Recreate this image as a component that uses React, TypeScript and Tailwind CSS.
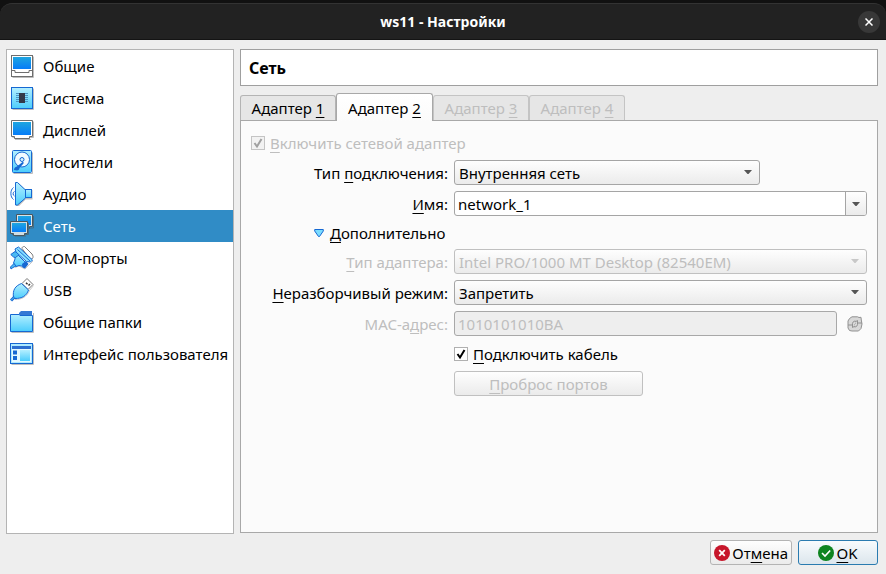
import { useState, type ReactNode } from 'react';

const BlueGradient = ({ id }: { id: string }) => (
  <defs>
    <linearGradient id={`${id}-deep`} x1="0" y1="0" x2="0" y2="1">
      <stop offset="0" stopColor="#1fa6e0" />
      <stop offset="1" stopColor="#067cf8" />
    </linearGradient>
    <linearGradient id={`${id}-light`} x1="0" y1="0" x2="0" y2="1">
      <stop offset="0" stopColor="#b4efff" />
      <stop offset="1" stopColor="#4ccdfc" />
    </linearGradient>
  </defs>
);

function Icon({ id, children }: { id: string; children: ReactNode }) {
  return (
    <svg viewBox="0 0 24 24" className="size-6 shrink-0" fill="none" aria-hidden="true">
      <BlueGradient id={id} />
      {children}
    </svg>
  );
}

const GeneralIcon = () => (
  <Icon id="general">
    <path d="M2.5 23.5h21V2.5" stroke="#bdbdbd" />
    <rect x="1.5" y="1.5" width="21" height="21" fill="#fff" stroke="#6e6e6e" />
    <rect x="3" y="3" width="18" height="12" fill="url(#general-deep)" />
    <path d="M1.5 16.5h3.5v2h14v-2h3.5" stroke="#6e6e6e" />
  </Icon>
);

const SystemIcon = () => (
  <Icon id="system">
    <path d="M2.5 23.5h21V2.5" stroke="#bdbdbd" />
    <rect x="1.5" y="1.5" width="21" height="21" fill="url(#system-light)" stroke="#1668d2" />
    <path d="M6 7.5h12M6 9.5h12M6 11.5h12M6 13.5h12M6 15.5h12" stroke="#4a93c4" />
    <rect x="9" y="7" width="6" height="10" fill="#33394a" />
  </Icon>
);

const DisplayIcon = () => (
  <Icon id="display">
    <path d="M2.5 19.5h21V3.5M5 21.5h16" stroke="#bdbdbd" />
    <path d="M1.5 2.5h21v16h-3v2h-15v-2h-3z" fill="#fff" stroke="#6e6e6e" />
    <rect x="3" y="4" width="18" height="13" fill="url(#display-deep)" />
  </Icon>
);

const StorageIcon = () => (
  <Icon id="storage">
    <path d="M3.5 23.5h19V2.5" stroke="#bdbdbd" />
    <rect x="2.5" y="0.5" width="19" height="22" rx="1" fill="url(#storage-light)" stroke="#1668d2" />
    <circle cx="12" cy="9.5" r="7.5" fill="#f2fbff" stroke="#1668d2" />
    <circle cx="12" cy="9.5" r="2" fill="#d8f4ff" stroke="#1668d2" />
    <path d="M4 20c0-2 1-3 3-3.5l5.5-4.5c1 0 1.5.5 1 1.5l-4 4.5c0 1.5-1 2.5-2.5 2.5z" fill="#1668d2" />
  </Icon>
);

const AudioIcon = () => (
  <Icon id="audio">
    <path d="M6 1h2.5l7 7h7v9.500h-7l-6.500 6.500h-3z" fill="#bdbdbd" />
    <path d="M5.5.5h2l8 7.500v8l-8 7h-2z" fill="url(#audio-light)" stroke="#1668d2" />
    <rect x="15.5" y="7.5" width="6" height="8" fill="url(#audio-light)" stroke="#1668d2" />
    <path d="M4.500 9.500a2.500 2.500 0 0 0 0 4.500M3.500 5.500C0 8 0 15 3.500 17.500" stroke="#1668d2" />
  </Icon>
);

const NetworkIcon = () => (
  <Icon id="network">
    <path d="M8 14h15.5V2" stroke="#426d86" />
    <path d="M6.5.5h16v12h-3v2h-10v-2h-3z" fill="#d8e4ea" stroke="#48575f" />
    <rect x="8" y="2" width="13" height="9" fill="url(#network-deep)" />
    <path d="M2 20.5h16.5V9M5 22h11" stroke="#426d86" />
    <path d="M.5 7.5h17v12h-3v2h-11v-2h-3z" fill="#cfdde4" stroke="#48575f" />
    <rect x="2" y="9" width="14" height="9" fill="url(#network-deep)" />
  </Icon>
);

const SerialIcon = () => (
  <Icon id="serial">
    <path d="M12 2.500c0-1.500 1-2 2.500-2L22 8c1 1.500 1.500 3 .5 4.500l-2 1z" fill="#fff" stroke="#7c7c7c" />
    <path d="M5 21.500l4-1.500 6 3 8-8" stroke="#c8c8c8" />
    <path d="M5 6L15.500 16.500 14 20.500l-5-1-3 1L3.500 17 5 13z" fill="url(#serial-light)" stroke="#1668d2" strokeLinejoin="round" />
    <path d="M.800 8.500L5 5.500l4.500 3-4 3-2-.5z" fill="#4ab9f2" stroke="#1668d2" strokeLinejoin="round" />
    <path d="M12 18l4-3 2.500 3-3.500 4.500-2.500-1z" fill="#1668d2" />
    <path d="M8.500 1L22.500 14l-2 2-4-.5L6 6 5 3z" fill="#8be0ff" stroke="#1668d2" strokeLinejoin="round" />
    <path d="M7.500 3.500L20 15" stroke="#1668d2" />
    <path d="M1 23l-.5-2L4 17.500 6 20l-3 1.500z" fill="#4ab9f2" stroke="#1668d2" />
  </Icon>
);

const UsbIcon = () => (
  <Icon id="usb">
    <path d="M5 21.500c7 0 12-3 14.500-9l4-5" stroke="#c8c8c8" />
    <path d="M12 5.5l5-5 6 6-5 5z" fill="#fff" stroke="#777" />
    <path d="M16 4.800l1.500 1.500M18.500 7.500l1.500-1.500" stroke="#333" strokeWidth="1.500" />
    <path d="M3.500 19.5C2.500 12 5 8 11.5 5.500l7 6.500c-2 6-6.500 8.500-13.500 8.500z" fill="url(#usb-light)" stroke="#1668d2" />
    <path d="M1 22.500l3.500-3.500" stroke="#1668d2" strokeWidth="3" />
    <path d="M1.300 22.200l3-3" stroke="#58c9f8" />
  </Icon>
);

const FolderIcon = () => (
  <Icon id="folder">
    <path d="M1.5 22.500h22V3" stroke="#bdbdbd" />
    <path d="M9 5V3l2-2h11v5H9z" fill="#3478d4" />
    <path d="M.5 4.500H9l1 1h12.500v16H.5z" fill="url(#folder-light)" stroke="#1668d2" />
  </Icon>
);

const InterfaceIcon = () => (
  <Icon id="interface">
    <path d="M1.5 22.500h22V2.500" stroke="#bdbdbd" />
    <rect x="0.5" y="1.5" width="22" height="20" fill="#aeeaff" stroke="#1668d2" />
    <path d="M2 5.500h19" stroke="#2c6fd0" strokeWidth="3" />
    <rect x="2" y="7" width="19" height="13" fill="#e4f9ff" />
    <path d="M3 8.500h4v4H3zM3 14h4v4H3z" fill="#1668d2" />
    <rect x="10" y="8" width="10" height="11" fill="url(#interface-light)" />
  </Icon>
);

const sections = [
  { name: 'Общие', Glyph: GeneralIcon },
  { name: 'Система', Glyph: SystemIcon },
  { name: 'Дисплей', Glyph: DisplayIcon },
  { name: 'Носители', Glyph: StorageIcon },
  { name: 'Аудио', Glyph: AudioIcon },
  { name: 'Сеть', Glyph: NetworkIcon },
  { name: 'COM-порты', Glyph: SerialIcon },
  { name: 'USB', Glyph: UsbIcon },
  { name: 'Общие папки', Glyph: FolderIcon },
  { name: 'Интерфейс пользователя', Glyph: InterfaceIcon },
];

const Key = ({ children }: { children: string }) => (
  <span className="underline decoration-1 underline-offset-3 [text-decoration-skip-ink:none]">{children}</span>
);

const Arrow = ({ className = '' }: { className?: string }) => (
  <svg viewBox="0 0 8 4" className={`h-1 w-2 ${className}`} fill="currentColor" aria-hidden="true">
    <path d="M0 0h8L4.500 4h-1z" />
  </svg>
);

function Combo({ id, value, disabled, className = '' }: { id: string; value: string; disabled?: boolean; className?: string }) {
  return (
    <div className={`relative ${className}`}>
      <select
        id={id}
        disabled={disabled}
        defaultValue={value}
        className="block h-[25px] w-full appearance-none rounded-[3px] border border-[#a5a5a5] bg-linear-to-b from-[#fefefe] to-[#ebebeb] px-1 leading-5 text-black opacity-100 disabled:border-[#c0c0c0] disabled:text-[#bebebe]"
      >
        <option>{value}</option>
      </select>
      <Arrow className={`pointer-events-none absolute top-[10px] right-2 ${disabled ? 'text-[#c8c8c8]' : 'text-[#555]'}`} />
    </div>
  );
}

function Check({ disabled, children }: { disabled?: boolean; children: ReactNode }) {
  return (
    <label className={`flex h-[23px] items-center gap-[5px] ${disabled ? 'text-[#bebebe]' : ''}`}>
      <span className="relative size-3.5 shrink-0">
        <input
          type="checkbox"
          defaultChecked
          disabled={disabled}
          className="peer block size-3.5 appearance-none border border-[#b0b0b0] bg-white disabled:border-[#c4c4c4] disabled:bg-[#f2f2f2]"
        />
        <svg
          viewBox="0 0 14 14"
          className={`pointer-events-none absolute inset-0 hidden size-3.5 peer-checked:block ${disabled ? 'text-[#a0a0a0]' : 'text-black'}`}
          fill="none"
          stroke="currentColor"
          strokeWidth="2"
          aria-hidden="true"
        >
          <path d="M3.500 7l2.500 3.500L10.500 3" />
        </svg>
      </span>
      <span>{children}</span>
    </label>
  );
}

export default function App() {
  const [section, setSection] = useState('Сеть');
  const [tab, setTab] = useState(2);

  return (
    <div className="flex min-h-screen flex-col bg-[#eeeeee] font-['Noto_Sans','Open_Sans',sans-serif] text-[15px] leading-5 text-black">
      <header className="bg-[#111] pt-[3px]">
        <div className="grid h-[37px] grid-cols-[1fr_auto_1fr] items-center rounded-t-xl border-t border-b border-t-[#333] border-b-[#141414] bg-[#222] px-1.5">
          <h1 className="col-start-2 text-sm font-bold text-white">ws11 - Настройки</h1>
          <button type="button" aria-label="Закрыть" className="flex size-[22px] items-center justify-center justify-self-end rounded-full bg-[#383838] text-white">
            <svg viewBox="0 0 8 8" className="size-2" stroke="currentColor" strokeWidth="1.500" aria-hidden="true">
              <path d="M.5.5l7 7M7.500.5l-7 7" />
            </svg>
          </button>
        </div>
      </header>

      <div className="grid flex-1 grid-cols-[228px_1fr] gap-1.5 pt-[9px] pr-2 pl-1.5">
        <nav className="border border-[#b4b4b4] bg-white">
          {sections.map(({ name, Glyph }) => (
            <button
              key={name}
              type="button"
              onClick={() => setSection(name)}
              className={`flex h-8 w-full items-center gap-[9px] pl-[3px] text-left whitespace-nowrap ${section === name ? 'bg-[#308cc6] text-white' : ''}`}
            >
              <Glyph />
              <span>{name}</span>
            </button>
          ))}
        </nav>

        <main className="flex flex-col pb-px">
          <h2 className="mb-[7px] flex h-[37px] items-center border border-[#9f9f9f] bg-white px-2 text-base font-bold">{section}</h2>

          <div role="tablist" className="flex h-[27px] items-end">
            {[1, 2, 3, 4].map((n) => (
              <button
                key={n}
                type="button"
                role="tab"
                aria-selected={tab === n}
                disabled={n > 2}
                onClick={() => setTab(n)}
                className={`rounded-t-[3px] border border-b-0 ${
                  tab === n
                    ? 'relative -mb-px h-7 w-[97px] border-[#a8a8a8] bg-linear-to-b from-white to-[#fbfbfb]'
                    : 'h-[25px] w-24 border-[#b4b4b4] bg-[#e6e6e6] disabled:border-[#c4c4c4] disabled:text-[#bebebe]'
                }`}
              >
                Адаптер <Key>{String(n)}</Key>
              </button>
            ))}
          </div>

          <section className="flex flex-1 flex-col gap-1.5 border border-[#a8a8a8] bg-[#fbfbfb] p-2.5">
            <Check disabled>
              <Key>В</Key>ключить сетевой адаптер
            </Check>

            <div className="grid grid-cols-[197px_1fr] items-center gap-1.5">
              <label htmlFor="attachment" className="text-right">Тип <Key>п</Key>одключения:</label>
              <Combo id="attachment" value="Внутренняя сеть" className="w-[306px]" />

              <label htmlFor="network" className="text-right"><Key>И</Key>мя:</label>
              <div className="flex h-[25px] rounded-[3px] border border-[#a5a5a5] bg-white">
                <input id="network" defaultValue="network_1" className="min-w-0 flex-1 rounded-[3px] px-[3px] outline-none" />
                <button type="button" aria-label="Показать список" className="flex w-[21px] items-center justify-center rounded-r-[2px] border-l border-[#a5a5a5] bg-linear-to-b from-[#fefefe] to-[#ebebeb] text-[#555]">
                  <Arrow />
                </button>
              </div>

              <button type="button" aria-expanded="true" className="col-span-2 flex h-[21px] items-center gap-1.5 pl-[63px]">
                <svg viewBox="0 0 10 8" className="h-2 w-2.5" aria-hidden="true">
                  <path d="M.7.5h8.600v1.500L5.500 7.500h-1L.7 2z" fill="#7adcff" stroke="#1668d2" />
                </svg>
                <span><Key>Д</Key>ополнительно</span>
              </button>

              <label htmlFor="adapter" className="text-right text-[#bebebe]"><Key>Т</Key>ип адаптера:</label>
              <Combo id="adapter" disabled value="Intel PRO/1000 MT Desktop (82540EM)" />

              <label htmlFor="promiscuous" className="text-right"><Key>Н</Key>еразборчивый режим:</label>
              <Combo id="promiscuous" value="Запретить" />

              <label htmlFor="mac" className="text-right text-[#bebebe]">MAC-а<Key>д</Key>рес:</label>
              <div className="flex gap-1.5">
                <input id="mac" disabled defaultValue="1010101010BA" className="h-[25px] min-w-0 flex-1 rounded-[3px] border border-[#a8a8a8] bg-[#eeeeee] px-[3px] text-[#bebebe]" />
                <button type="button" disabled aria-label="Сгенерировать MAC-адрес" className="flex w-6 items-center justify-center">
                  <svg viewBox="0 0 16 16" className="size-4" fill="none" stroke="#929292" aria-hidden="true">
                    <path d="M2.500 2.500L5 .8h5.500l1.500.7 2-.2.300 2.700.7 4-1 4.500-2.500 2.500H5l-2.500-.5L1 12V5z" fill="#d8d8d8" strokeLinejoin="round" />
                    <path d="M1 9h4.500v2.500L8 10M15 7h-4.500V4.500L8 6M5.500 9C5 6.500 6.500 5 8.500 5M10.500 7c.5 2.500-1 4-3 4M7.500 8.500l1-1" />
                  </svg>
                </button>
              </div>

              <div className="col-start-2">
                <Check><Key>П</Key>одключить кабель</Check>
              </div>

              <button type="button" disabled className="col-start-2 h-[25px] w-[189px] rounded-[3px] border border-[#c0c0c0] bg-linear-to-b from-[#fefefe] to-[#ebebeb] text-[#bebebe]">
                <Key>П</Key>роброс портов
              </button>
            </div>
          </section>
        </main>
      </div>

      <footer className="flex justify-end gap-1.5 pt-1.5 pr-2 pb-[9px]">
        <button type="button" className="flex h-[25px] items-center gap-0.5 rounded-[3px] border border-[#b4b4b4] bg-linear-to-b from-[#fefefe] to-[#ebebeb] px-[3px]">
          <svg viewBox="0 0 16 16" className="size-4" aria-hidden="true">
            <circle cx="8" cy="8" r="8" fill="#c7162b" />
            <path d="M5.200 5.200l5.600 5.600M10.800 5.200l-5.600 5.600" stroke="#fff" strokeWidth="1.800" />
          </svg>
          <span>От<Key>м</Key>ена</span>
        </button>
        <button type="button" className="flex h-[25px] w-20 items-center justify-center gap-0.5 rounded-[3px] border border-[#2a7bb0] bg-linear-to-b from-[#f8fbfd] to-[#dce6ed]">
          <svg viewBox="0 0 16 16" className="size-4" aria-hidden="true">
            <circle cx="8" cy="8" r="8" fill="#0e8420" />
            <path d="M4 8l3 3 5.200-5.500" fill="none" stroke="#fff" strokeWidth="1.600" />
          </svg>
          <span><Key>O</Key>K</span>
        </button>
      </footer>
    </div>
  );
}
